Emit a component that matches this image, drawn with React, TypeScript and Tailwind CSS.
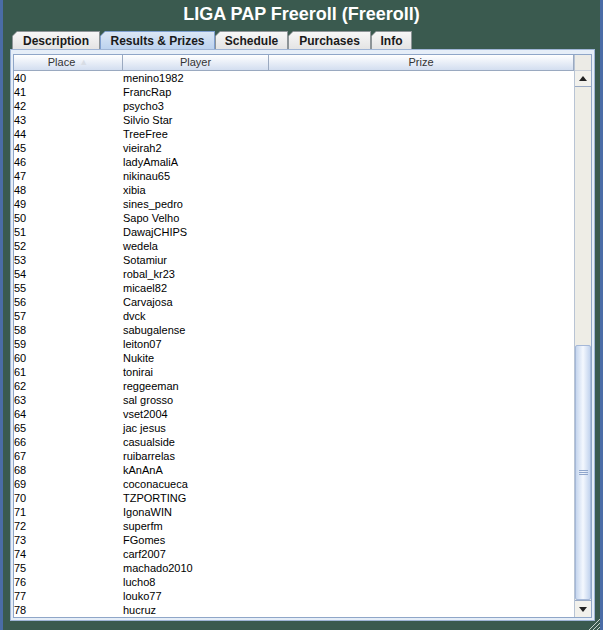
import React from 'react';

const players = [
  'menino1982', 'FrancRap', 'psycho3', 'Silvio Star', 'TreeFree', 'vieirah2', 'ladyAmaliA',
  'nikinau65', 'xibia', 'sines_pedro', 'Sapo Velho', 'DawajCHIPS', 'wedela', 'Sotamiur',
  'robal_kr23', 'micael82', 'Carvajosa', 'dvck', 'sabugalense', 'leiton07', 'Nukite',
  'tonirai', 'reggeeman', 'sal grosso', 'vset2004', 'jac jesus', 'casualside', 'ruibarrelas',
  'kAnAnA', 'coconacueca', 'TZPORTING', 'IgonaWIN', 'superfm', 'FGomes', 'carf2007',
  'machado2010', 'lucho8', 'louko77', 'hucruz',
];

const tabs = [
  { label: 'Description', w: 'w-[88px]' },
  { label: 'Results & Prizes', w: 'w-[115px]', active: true },
  { label: 'Schedule', w: 'w-[73px]' },
  { label: 'Purchases', w: 'w-[83px]' },
  { label: 'Info', w: 'w-[41px]' },
];

function Tab({ label, w, active }: { label: string; w: string; active?: boolean }) {
  return (
    <div
      className={`${w} h-[18px] [clip-path:polygon(5px_0,100%_0,100%_100%,0_100%,0_5px)] ${
        active ? 'bg-[#7f9fd0]' : 'bg-[#8d9497]'
      }`}
    >
      <div
        className={`ml-px mt-px mr-px h-[17px] flex items-center justify-center text-[12px] font-bold [clip-path:polygon(4px_0,100%_0,100%_100%,0_100%,0_4px)] ${
          active
            ? 'bg-gradient-to-b from-[#dbe7f6] to-[#bcd2ee] text-[#1a1a1a]'
            : 'bg-gradient-to-b from-[#f7f7f7] to-[#e4e4e4] text-[#1a1a1a]'
        }`}
      >
        {label}
      </div>
    </div>
  );
}

function HeaderCell({ children, className }: { children: React.ReactNode; className: string }) {
  return (
    <div
      className={`${className} h-full flex items-center justify-center border-r border-[#9aa9c0] bg-gradient-to-b from-[#ffffff] to-[#d3def0] text-[11px] text-[#333]`}
    >
      {children}
    </div>
  );
}

export default function App() {
  return (
    <div
      className="relative w-[603px] h-[630px] bg-[#3a5a4f] border-x-[3px] border-[#4a6ca6] flex flex-col overflow-hidden"
      style={{ fontFamily: '"Liberation Sans", Arial, sans-serif' }}
    >
      <div className="h-[29px] flex items-center justify-center text-white font-bold text-[18px]">
        LIGA PAP Freeroll (Freeroll)
      </div>

      <div className="flex items-end ml-[9px] h-[20px]">
        {tabs.map((t) => (
          <Tab key={t.label} {...t} />
        ))}
      </div>

      <div className="ml-[7px] w-[585px] h-[572px] border border-[#9fb5d6] bg-[#e6eef8] pt-[4px] pb-[3px] px-[2px] flex flex-col">
        <div className="flex flex-1 border border-[#8fa6c8] bg-white">
          <div className="flex-1 flex flex-col">
            <div className="h-[16px] flex border-b border-[#9aa9c0]">
              <HeaderCell className="w-[109px]">
                Place <span className="ml-[4px] text-[9px] text-[#d8dde5]">▲</span>
              </HeaderCell>
              <HeaderCell className="w-[146px]">Player</HeaderCell>
              <HeaderCell className="flex-1">Prize</HeaderCell>
            </div>
            <div className="flex flex-col">
              {players.map((p, i) => (
                <div key={p} className="h-[14px] flex items-center text-[11px] text-black leading-none">
                  <div className="w-[109px]">{40 + i}</div>
                  <div className="flex-1">{p}</div>
                </div>
              ))}
            </div>
          </div>

          <div className="w-[17px] flex flex-col border-l border-[#b8c4d4] bg-[#eeede6]">
            <div className="h-[16px] bg-[#ecebe6] border-b border-[#c9cfd8]" />
            <div className="h-[16px] flex items-center justify-center bg-[#f2f1ec] border-b border-[#9aaac4]">
              <svg width="8" height="5" viewBox="0 0 8 5">
                <path d="M0 5 L4 0 L8 5 Z" fill="#222" />
              </svg>
            </div>
            <div className="flex-1 bg-[#eeede6]" />
            <div className="h-[255px] flex items-center justify-center rounded-[2px] border border-[#a5b8d8] bg-gradient-to-r from-[#c6d6ee] via-[#f4f8fe] to-[#c3d4ee]">
              <svg width="9" height="6" viewBox="0 0 9 6">
                <path d="M0 0.5 H9 M0 2.5 H9 M0 4.5 H9" stroke="#8fa6cc" strokeWidth="1" />
              </svg>
            </div>
            <div className="h-[17px] flex items-center justify-center bg-[#f2f1ec] border-t border-[#9aaac4]">
              <svg width="8" height="5" viewBox="0 0 8 5">
                <path d="M0 0 L8 0 L4 5 Z" fill="#222" />
              </svg>
            </div>
          </div>
        </div>
      </div>

      <svg className="absolute right-0 bottom-0" width="13" height="13" viewBox="0 0 13 13">
        <path d="M13 2 L2 13 M13 6 L6 13 M13 10 L10 13" stroke="#c9d3cf" strokeWidth="1" />
      </svg>
    </div>
  );
}
